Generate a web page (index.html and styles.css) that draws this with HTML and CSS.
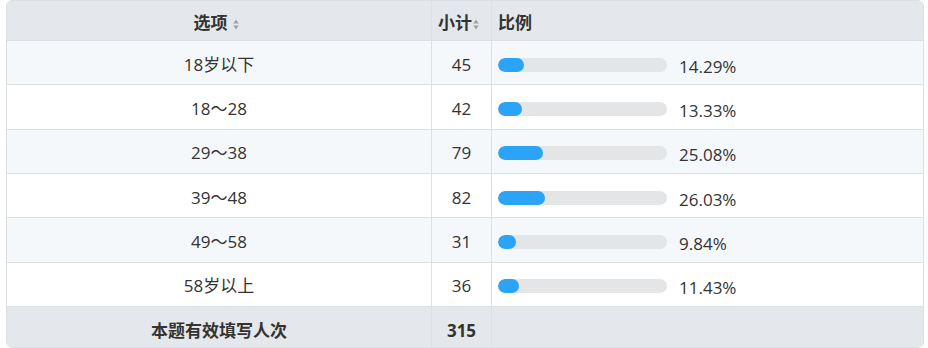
FILE: index.html
```html
<!DOCTYPE html>
<html lang="zh">
<head>
<meta charset="utf-8">
<title>统计</title>
<link rel="stylesheet" href="styles.css">
</head>
<body>
<div class="wrap">
<table class="stat">
  <colgroup><col class="c1"><col class="c2"><col class="c3"></colgroup>
  <thead>
    <tr>
      <th class="center"><span class="th-in">选项<svg class="sort" viewBox="0 0 6 11" width="6" height="11"><path d="M3 0.5 L5.7 4.5 L0.3 4.5 Z"/><path d="M3 10.5 L5.7 6.5 L0.3 6.5 Z"/></svg></span></th>
      <th class="center tight"><span class="th-in">小计<svg class="sort" viewBox="0 0 6 11" width="6" height="11"><path d="M3 0.5 L5.7 4.5 L0.3 4.5 Z"/><path d="M3 10.5 L5.7 6.5 L0.3 6.5 Z"/></svg></span></th>
      <th class="left">比例</th>
    </tr>
  </thead>
  <tbody>
    <tr class="odd"><td class="center">18岁以下</td><td class="center">45</td><td><div class="pct"><div class="bar"><div class="fill" style="width:26px"></div></div><span class="val">14.29%</span></div></td></tr>
    <tr><td class="center">18～28</td><td class="center">42</td><td><div class="pct"><div class="bar"><div class="fill" style="width:24px"></div></div><span class="val">13.33%</span></div></td></tr>
    <tr class="odd"><td class="center">29～38</td><td class="center">79</td><td><div class="pct"><div class="bar"><div class="fill" style="width:45px"></div></div><span class="val">25.08%</span></div></td></tr>
    <tr><td class="center">39～48</td><td class="center">82</td><td><div class="pct"><div class="bar"><div class="fill" style="width:47px"></div></div><span class="val">26.03%</span></div></td></tr>
    <tr class="odd"><td class="center">49～58</td><td class="center">31</td><td><div class="pct"><div class="bar"><div class="fill" style="width:18px"></div></div><span class="val">9.84%</span></div></td></tr>
    <tr><td class="center">58岁以上</td><td class="center">36</td><td><div class="pct"><div class="bar"><div class="fill" style="width:21px"></div></div><span class="val">11.43%</span></div></td></tr>
  </tbody>
  <tfoot>
    <tr><td class="center b">本题有效填写人次</td><td class="center b">315</td><td></td></tr>
  </tfoot>
</table>
</div>
</body>
</html>
```
FILE: styles.css
```css
html, body { margin: 0; padding: 0; background: #fff; }
body {
  font-family: "Open Sans", "Noto Sans CJK SC", sans-serif;
  font-size: 17px;
  color: #333;
}
.wrap {
  margin-left: 6px;
  width: 918px;
  height: 348px;
  box-sizing: border-box;
  border: 1px solid #dcdfe3;
  border-radius: 6px;
  overflow: hidden;
}
.stat {
  width: 100%;
  border-collapse: separate;
  border-spacing: 0;
  table-layout: fixed;
}
.c1 { width: 424px; }
.c2 { width: 60px; }
.stat th, .stat td {
  padding: 0;
  border-bottom: 1px solid #dcdfe3;
  vertical-align: middle;
  line-height: 24px;
}
.stat th + th, .stat td + td { border-left: 1px solid #dcdfe3; }
.stat thead th {
  height: 34px;
  padding-top: 5px;
  background: #e4e7eb;
  font-weight: bold;
  color: #333;
}
.stat tbody td { height: 39.33px; padding-top: 4px; background: #fff; }
.stat tbody tr.odd td { background: #f5f8fb; }
.stat tfoot td {
  height: 31px;
  padding-top: 9px;
  background: #e4e7eb;
  border-bottom: none;
}
.center { text-align: center; }
.stat th.left { text-align: left; padding-left: 6px; }
.b { font-weight: bold; }
.th-in { display: inline-flex; align-items: center; gap: 5px; }
.th-in .sort { margin-top: 2px; margin-right: 6px; }
.tight .th-in { gap: 1px; }
.sort { fill: #a0a0a0; }
.pct { display: flex; align-items: center; padding-left: 6px; }
.bar {
  width: 169px;
  height: 14px;
  border-radius: 7px;
  background: #e4e5e7;
  overflow: hidden;
}
.fill { height: 100%; background: #2ba4f7; border-radius: 7px; }
.val { margin-left: 12px; padding-top: 4px; }
```
